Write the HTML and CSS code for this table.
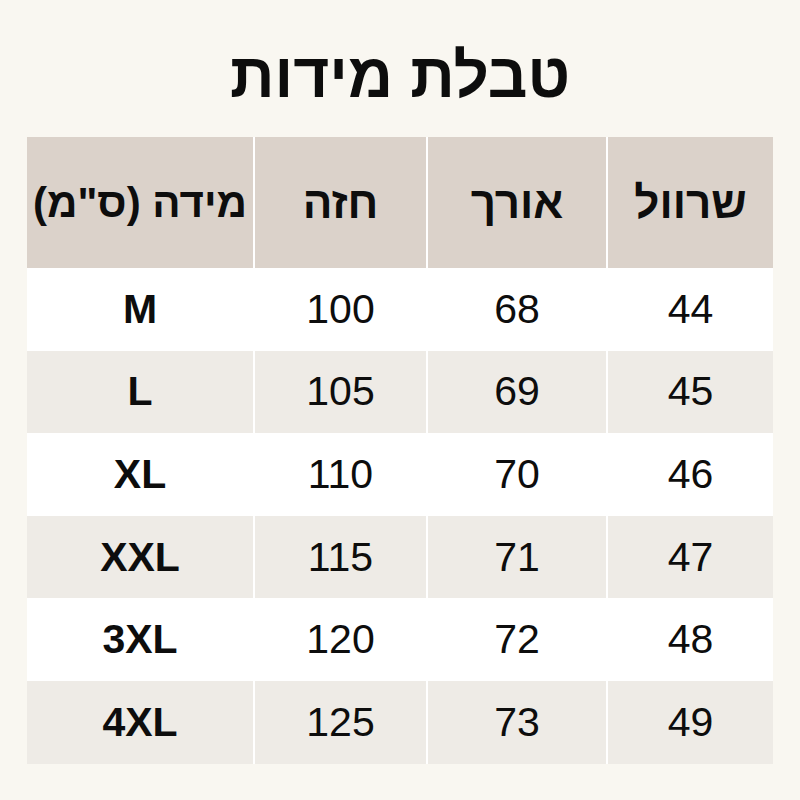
FILE: index.html
```html
<!DOCTYPE html>
<html lang="he" dir="rtl">
<head>
<meta charset="utf-8">
<title>טבלת מידות</title>
<link rel="stylesheet" href="styles.css">
</head>
<body>
<main class="page">
  <h1 class="title">טבלת מידות</h1>
  <table class="sizes">
    <colgroup>
      <col class="c-sleeve"><col class="c-length"><col class="c-chest"><col class="c-size">
    </colgroup>
    <thead>
      <tr><th>שרוול</th><th>אורך</th><th>חזה</th><th class="unit">מידה (ס"מ)</th></tr>
    </thead>
    <tbody>
      <tr><td>44</td><td>68</td><td>100</td><td class="size">M</td></tr>
      <tr><td>45</td><td>69</td><td>105</td><td class="size">L</td></tr>
      <tr><td>46</td><td>70</td><td>110</td><td class="size">XL</td></tr>
      <tr><td>47</td><td>71</td><td>115</td><td class="size">XXL</td></tr>
      <tr><td>48</td><td>72</td><td>120</td><td class="size">3XL</td></tr>
      <tr><td>49</td><td>73</td><td>125</td><td class="size">4XL</td></tr>
    </tbody>
  </table>
</main>
</body>
</html>
```
FILE: styles.css
```css
html, body {
  margin: 0;
  padding: 0;
}
body {
  background: #f9f7f1;
  font-family: "Liberation Sans", Arial, sans-serif;
  color: #0d0d0d;
}
.page {
  width: 746px;
  margin: 0 auto;
  padding-top: 35px;
}
.title {
  margin: 0;
  height: 102px;
  font-size: 62px;
  font-weight: 700;
  line-height: 82px;
  text-align: center;
}
.sizes {
  width: 746px;
  border-collapse: collapse;
  table-layout: fixed;
}
.c-sleeve { width: 166px; }
.c-length { width: 180px; }
.c-chest { width: 173px; }
.c-size { width: 227px; }
.sizes th,
.sizes td {
  padding: 0;
  text-align: center;
  vertical-align: middle;
  border-left: 2px solid #ffffff;
}
.sizes th:last-child,
.sizes td:last-child {
  border-left: none;
}
.sizes th {
  background: #dbd2ca;
  height: 131px;
  font-size: 44px;
  font-weight: 700;
}
.sizes th.unit {
  font-size: 42px;
}
.sizes td {
  height: 82.6px;
  font-size: 41px;
  font-weight: 400;
}
.sizes tbody tr:nth-child(odd) td {
  background: #ffffff;
}
.sizes tbody tr:nth-child(even) td {
  background: #eeebe6;
}
.sizes td.size {
  font-weight: 700;
}
```
